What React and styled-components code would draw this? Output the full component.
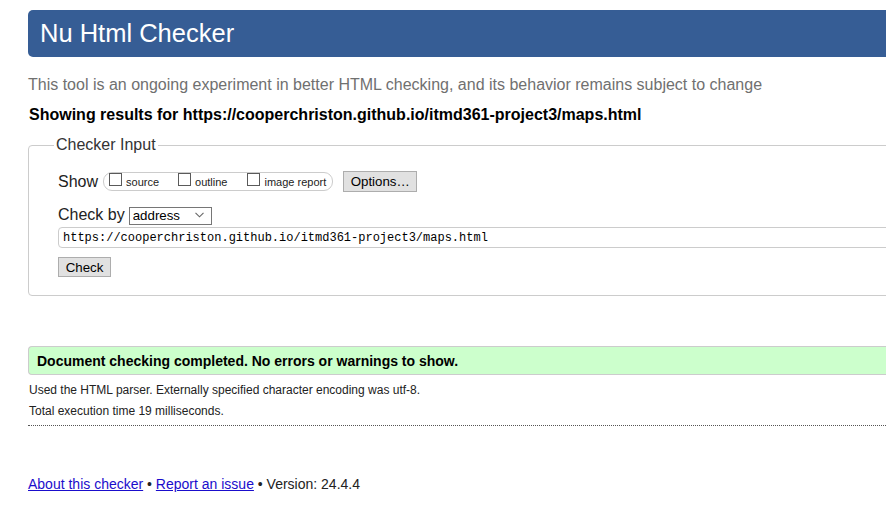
import React from 'react';
import styled, { createGlobalStyle } from 'styled-components';

const Global = createGlobalStyle`
html, body { margin:0; padding:0; overflow:hidden; background:#fff; }
body { font-family:"Liberation Sans", Arial, sans-serif; color:#222; }
`

const Page = styled.div`
width:1200px; padding:10px 0 0 28px; box-sizing:border-box;
`
const Header = styled.h1`
margin:0; height:47px; line-height:47px; padding-left:12px;
background:#365d95; color:#fff; border-radius:5px;
font-size:25.5px; font-weight:normal;
`
const Intro = styled.p`
margin:19px 0 0; font-size:16px; line-height:18px; color:#707070;
`
const Results = styled.p`
margin:12px 0 0 1px; font-size:16px; line-height:18px; font-weight:bold; color:#000;
`
const Fieldset = styled.fieldset`
margin:12px 0 0; border:1px solid #ccc; border-radius:4px;
padding:0 0 18px 29px; min-width:0;
`
const Legend = styled.legend`
margin-left:-4px; padding:0 2px; font-size:16px; line-height:18px; color:#333;
`
const Row = styled.div`
display:flex; align-items:center; margin-top:${p => p.$top}px;
font-size:16px; color:#222;
`
const Toggles = styled.div`
display:flex; align-items:center; margin-left:5px; height:17px;
border:1px solid #ccc; border-radius:9px; padding:0 6px 0 5px;
`
const Toggle = styled.label`
display:flex; align-items:center; font-size:11px; color:#222;
margin-right:${p => p.$gap}px;
`
const Box = styled.span`
display:inline-block; width:11px; height:11px; border:1px solid #5a5a5a;
background:#fff; margin-right:4px; position:relative; top:-2px;
`
const Button = styled.button`
font-family:"Liberation Sans", Arial, sans-serif; font-size:13.3px;
background:#e1e1e1; border:1px solid #adadad; color:#000;
height:${p => p.$h}px; width:${p => p.$w}px; padding:0; margin-left:${p => p.$left || 0}px;
`
const SelectWrap = styled.div`
position:relative; margin-left:4px; width:83px; height:18px;
`
const Select = styled.select`
appearance:none; width:100%; height:100%; box-sizing:border-box;
border:1px solid #767676; background:#fff; border-radius:0;
font-family:"Liberation Sans", Arial, sans-serif; font-size:13.3px; color:#000;
padding:0 0 0 3px; outline:none;
`
const Chevron = styled.svg`
position:absolute; right:8px; top:6px; pointer-events:none;
`
const UrlInput = styled.input`
margin-top:3px; display:block; width:1200px; height:21px; box-sizing:border-box;
border:1px solid #ccc; border-radius:4px; padding:0 0 0 4px;
font-family:"Liberation Mono", "DejaVu Sans Mono", monospace; font-size:12px; color:#000;
`
const Success = styled.div`
margin-top:50px; height:29px; box-sizing:border-box; display:flex; align-items:center;
background:#ccffcc; border:1px solid #ccc; border-right:none; border-radius:4px 0 0 4px;
padding-left:8px; font-size:14px; font-weight:bold; color:#000;
`
const Note = styled.p`
margin:${p => p.$top}px 0 0 1px; font-size:12px; line-height:14px; color:#222;
`
const Rule = styled.hr`
margin:7px 0 0; border:none; border-top:1px dotted #555; height:0;
`
const Footer = styled.p`
margin:50px 0 0; font-size:14px; line-height:16px; color:#222;
a { color:#1a0dcc; text-decoration:underline; }
`

const App = () => {
    return (
        <Page>
            <Global />
            <Header>Nu Html Checker</Header>
            <Intro>This tool is an ongoing experiment in better HTML checking, and its behavior remains subject to change</Intro>
            <Results>Showing results for https://cooperchriston.github.io/itmd361-project3/maps.html</Results>
            <Fieldset>
                <Legend>Checker Input</Legend>
                <Row $top={17}>
                    Show
                    <Toggles>
                        <Toggle $gap={19}><Box />source</Toggle>
                        <Toggle $gap={20}><Box />outline</Toggle>
                        <Toggle $gap={0}><Box />image report</Toggle>
                    </Toggles>
                    <Button $w={74} $h={21} $left={10}>Options…</Button>
                </Row>
                <Row $top={14}>
                    Check by
                    <SelectWrap>
                        <Select defaultValue="address">
                            <option value="address">address</option>
                            <option value="file">file upload</option>
                            <option value="text">text input</option>
                        </Select>
                        <Chevron width="9" height="6" viewBox="0 0 9 6">
                            <path d="M0.5 0.8 L4.5 4.8 L8.5 0.8" fill="none" stroke="#666" strokeWidth="1.1" />
                        </Chevron>
                    </SelectWrap>
                </Row>
                <UrlInput readOnly value="https://cooperchriston.github.io/itmd361-project3/maps.html" />
                <Row $top={9}>
                    <Button $w={53} $h={20}>Check</Button>
                </Row>
            </Fieldset>
            <Success>Document checking completed. No errors or warnings to show.</Success>
            <Note $top={8}>Used the HTML parser. Externally specified character encoding was utf-8.</Note>
            <Note $top={7}>Total execution time 19 milliseconds.</Note>
            <Rule />
            <Footer>
                <a href="#about">About this checker</a> • <a href="#report">Report an issue</a> • Version: 24.4.4
            </Footer>
        </Page>
    );
};

export default App;
